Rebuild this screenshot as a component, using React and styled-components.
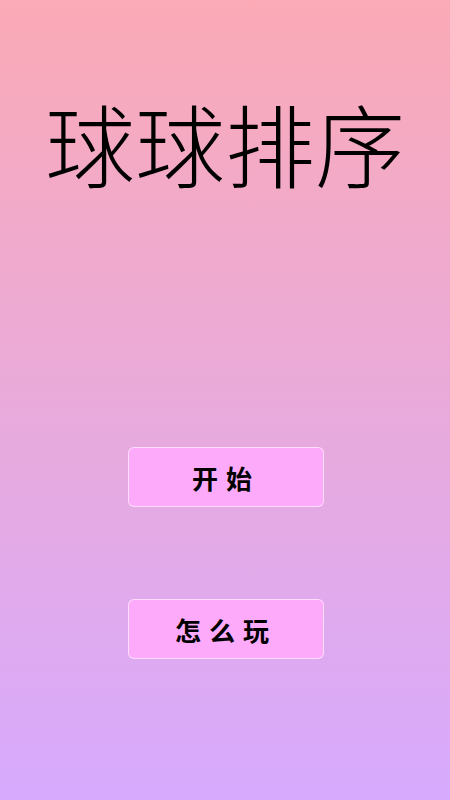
import React from "react";
import styled, { createGlobalStyle } from "styled-components";

const Global = createGlobalStyle`
  html, body { margin: 0; padding: 0; }
  body { font-family: "Noto Sans CJK SC", "Noto Sans", sans-serif; }
`;

const Screen = styled.div`
  width: 450px;
  height: 800px;
  background: linear-gradient(to bottom, #fbaab6, #d7aafe);
  display: flex;
  flex-direction: column;
  align-items: center;
  overflow: hidden;
`;

const Title = styled.h1`
  margin: 92px 0 0;
  font-family: "Noto Sans CJK SC", sans-serif;
  font-weight: 200;
  font-size: 90px;
  line-height: 100px;
  color: #000;
  letter-spacing: 0;
`;

const Menu = styled.div`
  margin: 255px 0 0 2px;
  display: flex;
  flex-direction: column;
  gap: 92px;
`;

const Button = styled.button`
  width: 196px;
  height: 60px;
  box-sizing: border-box;
  border: 1px solid rgba(255, 255, 255, 0.6);
  border-radius: 6px;
  background: #fdaafa;
  font-family: "Noto Sans CJK SC", sans-serif;
  font-weight: 700;
  font-size: 26px;
  letter-spacing: 8px;
  padding: 0;
  color: #000;
`;

export default function App() {
  return (
    <>
      <Global />
      <Screen>
        <Title>球球排序</Title>
        <Menu>
          <Button>开始</Button>
          <Button>怎么玩</Button>
        </Menu>
      </Screen>
    </>
  );
}
